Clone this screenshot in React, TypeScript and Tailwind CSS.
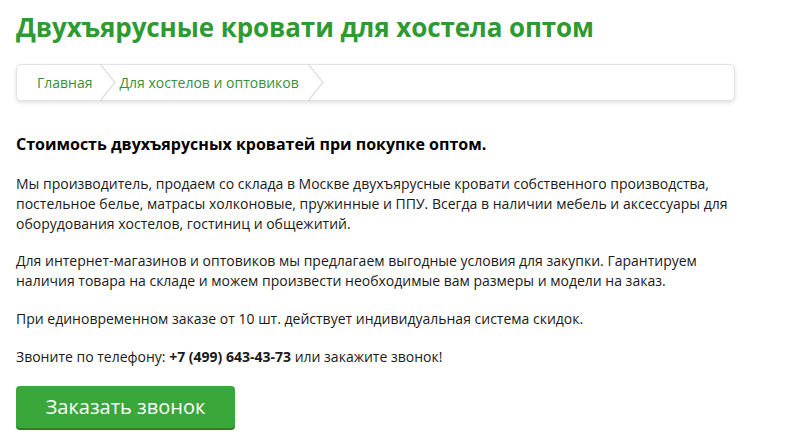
function Chevron() {
    return (
        <svg width="17" height="37" viewBox="0 0 17 37" className="shrink-0">
            <path d="M1 0 L16 18.5 L1 37" fill="none" stroke="#dcdcdc" strokeWidth="1.2" />
        </svg>
    )
}

export default function App() {
    return (
        <div className="w-[800px] h-[443px] bg-white overflow-hidden font-['Open_Sans',sans-serif] text-[#1a1a1a]">
            <div className="px-4 pt-[10px]">
                <h1 className="text-[26px] leading-[34px] font-bold text-[#2e9a31] tracking-[-0.1px]">
                    Двухъярусные кровати для хостела оптом
                </h1>

                <div className="mt-[20px] w-[719px] h-[37px] flex items-center rounded-[5px] border border-[#e3e3e3] shadow-[0_2px_4px_rgba(0,0,0,0.12)] bg-white">
                    <a className="pl-[20px] pr-[6px] text-[14px] text-[#3b8f3b]">Главная</a>
                    <Chevron />
                    <a className="pl-[4px] pr-[8px] text-[14px] text-[#3b8f3b]">Для хостелов и оптовиков</a>
                    <Chevron />
                </div>

                <h2 className="mt-[33px] text-[16px] leading-[20px] font-bold text-black">
                    Стоимость двухъярусных кроватей при покупке оптом.
                </h2>

                <div className="mt-[20px] text-[14px] leading-[20px] whitespace-nowrap">
                    <p>
                        Мы производитель, продаем со склада в Москве двухъярусные кровати собственного производства,<br />
                        постельное белье, матрасы холконовые, пружинные и ППУ. Всегда в наличии мебель и аксессуары для<br />
                        оборудования хостелов, гостиниц и общежитий.
                    </p>
                    <p className="mt-[17px]">
                        Для интернет-магазинов и оптовиков мы предлагаем выгодные условия для закупки. Гарантируем<br />
                        наличия товара на складе и можем произвести необходимые вам размеры и модели на заказ.
                    </p>
                    <p className="mt-[18px]">При единовременном заказе от 10 шт. действует индивидуальная система скидок.</p>
                    <p className="mt-[18px]">
                        Звоните по телефону: <b>+7 (499) 643-43-73</b> или закажите звонок!
                    </p>
                </div>

                <button className="mt-[19px] w-[219px] h-[42px] rounded-[4px] bg-[#3aa73a] shadow-[0_2px_0_#2a7f2a] text-white text-[20px] leading-none">
                    Заказать звонок
                </button>
            </div>
        </div>
    )
}
